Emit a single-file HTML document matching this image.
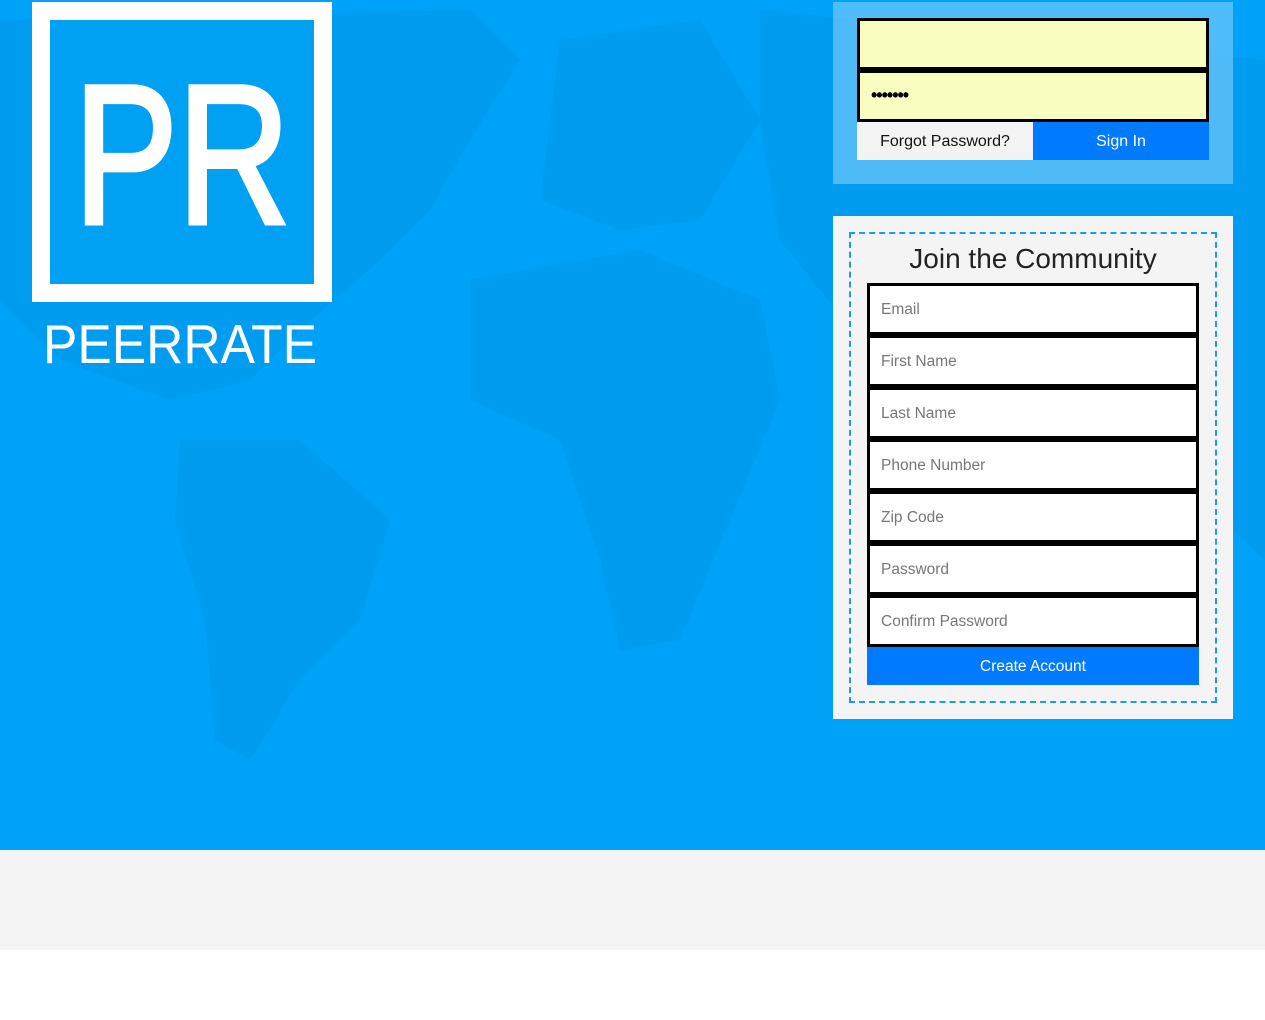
<!DOCTYPE html>
<html><head><meta charset="utf-8"><style>
*{box-sizing:border-box;margin:0;padding:0}
body{width:1265px;height:1020px;background:#fff;font-family:"Liberation Sans",sans-serif;position:relative;overflow:hidden}
.hero{position:absolute;left:0;top:0;width:1265px;height:850px;background:#00a2f8;overflow:hidden}
.foot{position:absolute;left:0;top:850px;width:1265px;height:100px;background:#f4f4f4}
.logo{position:absolute;left:32px;top:2px;width:300px;height:300px;border:18px solid #fff;background:#00a0f2}
.login{position:absolute;left:833px;top:2px;width:400px;height:182px;background:rgba(120,205,250,.65)}
.li{position:absolute;left:24px;width:352px;height:52px;border:3px solid #000;background:#f9fdc0}
.btn{position:absolute;top:120px;height:38px;width:176px;font-size:16px;text-align:center;line-height:40px}
.reg{position:absolute;left:833px;top:216px;width:400px;height:503px;background:#f4f4f4}
.dash{position:absolute;left:16px;top:16px;width:368px;height:471px;border:2px dashed #1a9ce8}
h1{position:absolute;left:0;width:400px;top:27px;text-align:center;font-weight:normal;font-size:28px;color:#222}
.ri{position:absolute;left:34px;width:332px;height:52px;border:3px solid #000;background:#fff;font-size:15.5px;color:#777;padding-left:11px;line-height:48px}
.ca{position:absolute;left:34px;top:431px;width:332px;height:38px;background:#007bff;color:#fff;text-align:center;line-height:40px;font-size:15.5px}
</style></head><body>
<div class="hero">
<svg width="1265" height="850" style="position:absolute;left:0;top:0" fill="#0090dd" opacity=".3">
<path d="M0 20 L470 10 L520 60 L470 140 L430 210 L380 260 L300 330 L250 380 L170 400 L60 360 L0 300Z"/>
<path d="M180 440 L300 440 L390 520 L360 620 L300 680 L250 760 L215 740 L205 620 L175 520Z"/>
<path d="M560 40 L700 20 L760 120 L700 220 L620 230 L540 200 Z"/>
<path d="M470 280 L640 250 L760 300 L780 400 L730 520 L680 640 L620 650 L600 560 L560 440 L470 400Z"/>
<path d="M760 10 L1265 60 L1265 560 L1200 500 L1060 420 L960 380 L860 340 L780 240 L760 120Z"/>
</svg>
<div class="logo"></div>
<svg width="340" height="380" style="position:absolute;left:0;top:0">
<text x="74" y="223" font-family="Liberation Sans" font-size="198" fill="#fff" stroke="#fff" stroke-width="5" textLength="216" lengthAdjust="spacingAndGlyphs">PR</text>
<text x="43" y="363" font-family="Liberation Sans" font-size="55" fill="#fff" textLength="274" lengthAdjust="spacingAndGlyphs">PEERRATE</text>
</svg>
<div class="login">
<div class="li" style="top:16px"></div>
<div class="li" style="top:68px;font-size:18px;font-weight:bold;padding-left:11px;line-height:44px;letter-spacing:-1px">•••••••</div>
<div class="btn" style="left:24px;background:#f3f3f3;color:#111">Forgot Password?</div>
<div class="btn" style="left:200px;background:#007bff;color:#fff">Sign In</div>
</div>
<div class="reg"><div class="dash"></div>
<h1>Join the Community</h1>
<div class="ri" style="top:67px">Email</div>
<div class="ri" style="top:119px">First Name</div>
<div class="ri" style="top:171px">Last Name</div>
<div class="ri" style="top:223px">Phone Number</div>
<div class="ri" style="top:275px">Zip Code</div>
<div class="ri" style="top:327px">Password</div>
<div class="ri" style="top:379px">Confirm Password</div>
<div class="ca">Create Account</div>
</div>
</div>
<div class="foot"></div>
</body></html>
